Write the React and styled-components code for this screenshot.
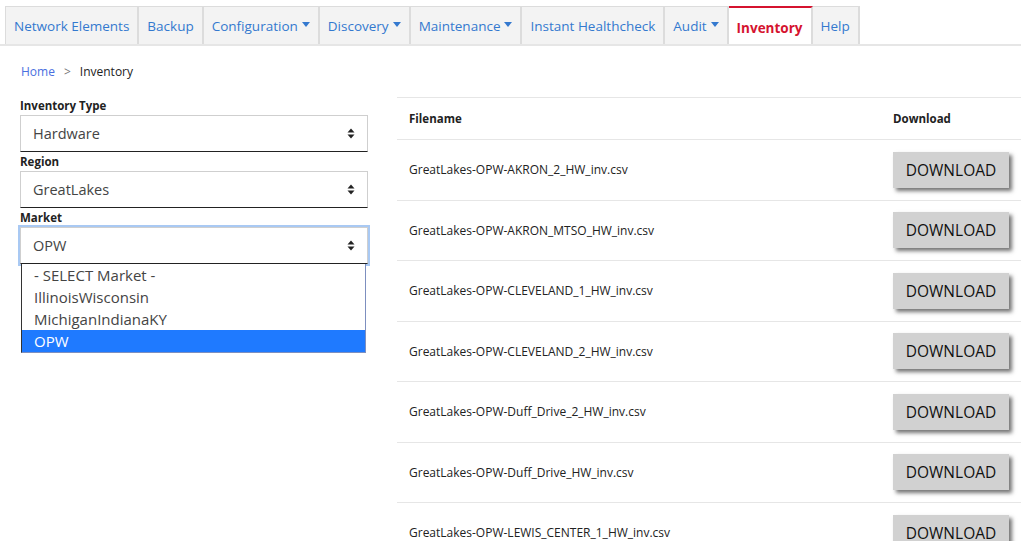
import React from "react";
import styled, { createGlobalStyle } from "styled-components";

const Global = createGlobalStyle`
  html, body { margin: 0; padding: 0; background: #fff; }
  body { font-family: "Open Sans", "Noto Sans", sans-serif; color: #333; overflow: hidden; }
  * { box-sizing: border-box; }
`;

const Page = styled.div`
  width: 1021px;
  height: 541px;
  overflow: hidden;
`;

const NavBar = styled.nav`
  margin-top: 6px;
  padding-left: 5px;
  display: flex;
  border-bottom: 2px solid #e6e6e6;
`;

const Tab = styled.div`
  height: 38px;
  display: flex;
  align-items: center;
  gap: 4px;
  padding: ${(p) => (p.$active ? "4px 8px 0" : "0 8px")};
  background: ${(p) => (p.$active ? "#fff" : "#f3f3f3")};
  border-top: ${(p) => (p.$active ? "2px solid #d5132f" : "1px solid #dcdcdc")};
  border-right: 2px solid #dcdcdc;
  border-left: ${(p) => (p.$first ? "1px solid #dcdcdc" : "0")};
  color: ${(p) => (p.$active ? "#d5132f" : "#3479cf")};
  font-weight: ${(p) => (p.$active ? 700 : 400)};
  font-size: 13.5px;
  white-space: nowrap;
`;

const Caret = styled.span`
  width: 0;
  height: 0;
  border-left: 4px solid transparent;
  border-right: 4px solid transparent;
  border-top: 5px solid #3479cf;
  margin-top: -2px;
`;

const Breadcrumb = styled.div`
  margin: 18px 0 0 21px;
  font-size: 12px;
  line-height: 16px;
  display: flex;
  gap: 9px;
`;

const Crumb = styled.span`
  color: ${(p) => (p.$link ? "#4a6fe0" : "#222")};
`;

const Sep = styled.span`
  color: #777;
`;

const Main = styled.div`
  display: flex;
  gap: 29px;
  margin-top: 17px;
  padding-left: 20px;
`;

const Left = styled.div`
  width: 348px;
  flex: none;
  display: flex;
  flex-direction: column;
`;

const Label = styled.div`
  font-size: 11.5px;
  font-weight: 700;
  line-height: 18px;
  color: #222;
  padding-top: ${(p) => (p.$first ? "0" : "1px")};
`;

const SelectWrap = styled.div`
  position: relative;
`;

const Select = styled.div`
  height: 37px;
  border: 1px solid #cfcfcf;
  border-bottom: 1px solid #222;
  display: flex;
  align-items: center;
  justify-content: space-between;
  padding: 0 12px 0 12px;
  font-size: 14.5px;
  color: #444;
  background: #fff;
  box-shadow: ${(p) => (p.$focus ? "0 0 0 2px #a9c9f3" : "none")};
`;

const List = styled.div`
  position: absolute;
  left: 1px;
  top: 37px;
  width: 345px;
  background: #fff;
  border-left: 1px solid #333;
  border-right: 1px solid #7d8fbf;
  border-bottom: 1px solid #7d8fbf;
  z-index: 2;
`;

const Option = styled.div`
  height: 22px;
  line-height: 22px;
  padding-left: 12px;
  font-size: 15px;
  color: ${(p) => (p.$sel ? "#fff" : "#444")};
  background: ${(p) => (p.$sel ? "#1f7aff" : "#fff")};
`;

const Table = styled.div`
  width: 640px;
  flex: none;
  border-top: 1px solid #e6e6e6;
`;

const Row = styled.div`
  display: grid;
  grid-template-columns: 484px 1fr;
  align-items: center;
  height: ${(p) => (p.$head ? "42px" : "60.5px")};
  border-bottom: 1px solid #e6e6e6;
`;

const Cell = styled.div`
  padding-left: 12px;
  font-size: ${(p) => (p.$head ? "11.5px" : "12px")};
  font-weight: ${(p) => (p.$head ? 700 : 400)};
  color: #222;
  white-space: nowrap;
`;

const Button = styled.button`
  width: 116px;
  height: 36px;
  border: 0;
  background: #d1d1d1;
  box-shadow: 3px 3px 4px rgba(0, 0, 0, 0.55);
  font-family: "Open Sans", "Noto Sans", sans-serif;
  font-size: 15.5px;
  color: #111;
  padding: 0;
  cursor: pointer;
`;

const Arrows = () => (
  <svg width="8" height="11" viewBox="0 0 8 11">
    <path d="M4 0.5 L7.5 4.5 H0.5 Z" fill="#222" />
    <path d="M4 10.5 L7.5 6.5 H0.5 Z" fill="#222" />
  </svg>
);

const tabs = [
  { t: "Network Elements" },
  { t: "Backup" },
  { t: "Configuration", c: true },
  { t: "Discovery", c: true },
  { t: "Maintenance", c: true },
  { t: "Instant Healthcheck" },
  { t: "Audit", c: true },
  { t: "Inventory", a: true },
  { t: "Help" },
];

const files = [
  "GreatLakes-OPW-AKRON_2_HW_inv.csv",
  "GreatLakes-OPW-AKRON_MTSO_HW_inv.csv",
  "GreatLakes-OPW-CLEVELAND_1_HW_inv.csv",
  "GreatLakes-OPW-CLEVELAND_2_HW_inv.csv",
  "GreatLakes-OPW-Duff_Drive_2_HW_inv.csv",
  "GreatLakes-OPW-Duff_Drive_HW_inv.csv",
  "GreatLakes-OPW-LEWIS_CENTER_1_HW_inv.csv",
];

export default function App() {
  return (
    <Page>
      <Global />
      <NavBar>
        {tabs.map((x, i) => (
          <Tab key={x.t} $active={x.a} $first={i === 0}>
            {x.t}
            {x.c && <Caret />}
          </Tab>
        ))}
      </NavBar>
      <Breadcrumb>
        <Crumb $link>Home</Crumb>
        <Sep>&gt;</Sep>
        <Crumb>Inventory</Crumb>
      </Breadcrumb>
      <Main>
        <Left>
          <Label $first>Inventory Type</Label>
          <Select>
            Hardware
            <Arrows />
          </Select>
          <Label>Region</Label>
          <Select>
            GreatLakes
            <Arrows />
          </Select>
          <Label>Market</Label>
          <SelectWrap>
            <Select $focus>
              OPW
              <Arrows />
            </Select>
            <List>
              <Option>- SELECT Market -</Option>
              <Option>IllinoisWisconsin</Option>
              <Option>MichiganIndianaKY</Option>
              <Option $sel>OPW</Option>
            </List>
          </SelectWrap>
        </Left>
        <Table>
          <Row $head>
            <Cell $head>Filename</Cell>
            <Cell $head>Download</Cell>
          </Row>
          {files.map((f) => (
            <Row key={f}>
              <Cell>{f}</Cell>
              <Cell>
                <Button>DOWNLOAD</Button>
              </Cell>
            </Row>
          ))}
        </Table>
      </Main>
    </Page>
  );
}
